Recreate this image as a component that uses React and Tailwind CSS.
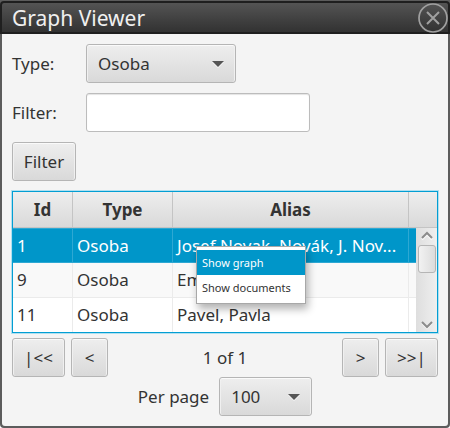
import React from "react";

const button =
  "h-[39px] rounded-[3px] border border-[#b5b5b5] bg-linear-to-b from-[#eeeeee] to-[#d9d9d9] text-center shadow-[inset_0_1px_0_#fafafa,inset_1px_0_0_#f0f0f0,inset_-1px_0_0_#f0f0f0]";

const rows = [
  { id: "1", type: "Osoba", alias: "Josef Novak, Novák, J. Nov...", selected: true },
  { id: "9", type: "Osoba", alias: "Em" },
  { id: "11", type: "Osoba", alias: "Pavel, Pavla" },
];

function Dropdown({ id, className, options }) {
  return (
    <div className={`relative ${className}`}>
      <select id={id} className={`${button} w-full appearance-none pr-8 pl-[11px] text-left outline-none`}>
        {options.map((o) => (
          <option key={o}>{o}</option>
        ))}
      </select>
      <svg className="pointer-events-none absolute top-4 right-3 h-2 w-3" viewBox="0 0 12 8" aria-hidden="true">
        <path d="M0 2H12L6 8Z" fill="#fafafa" />
        <path d="M0 1H12L6 7Z" fill="#555555" />
      </svg>
    </div>
  );
}

function TitleBar() {
  return (
    <header className="flex h-[33px] items-center justify-between rounded-t-[4px] border-2 border-[#1f1f1f] bg-linear-to-b from-[#545454] to-[#323232] pl-2.5">
      <h1 className="text-[21px] leading-7 text-[#f0f0f0]">Graph Viewer</h1>
      <button type="button" aria-label="Close" className="size-[30px] shrink-0">
        <svg viewBox="0 0 30 30" className="size-[30px]" fill="none" stroke="#a0a0a0">
          <circle cx="15" cy="15" r="14" strokeWidth="1.7" />
          <path d="M9 9L21 21M21 9L9 21" strokeWidth="2" />
        </svg>
      </button>
    </header>
  );
}

function ScrollBar() {
  return (
    <div className="absolute top-9 right-0 bottom-0 flex w-[21px] flex-col items-center bg-linear-to-r from-[#dedede] to-[#efefef]">
      <svg className="h-[17px] w-3 shrink-0" viewBox="0 0 12 17" fill="none" aria-hidden="true">
        <path d="M1 11.5L6 6.5L11 11.5" stroke="#fafafa" strokeWidth="2" />
        <path d="M1 10L6 5L11 10" stroke="#8c8c8c" strokeWidth="2" />
      </svg>
      <div className="h-7 w-[18px] shrink-0 rounded-[3px] border border-[#b5b5b5] bg-linear-to-r from-[#f2f2f2] to-[#dcdcdc]" />
      <svg className="mt-auto h-[14px] w-3 shrink-0" viewBox="0 0 12 14" fill="none" aria-hidden="true">
        <path d="M1 5L6 10L11 5" stroke="#fafafa" strokeWidth="2" />
        <path d="M1 4L6 9L11 4" stroke="#8c8c8c" strokeWidth="2" />
      </svg>
    </div>
  );
}

function ContextMenu() {
  return (
    <div
      role="menu"
      className="absolute top-[54px] left-[183px] w-[110px] border border-[#a8a8a8] bg-white py-[3px] text-[11px] leading-[25px] shadow-[2px_5px_8px_rgba(0,0,0,0.3)]"
    >
      <button type="button" role="menuitem" className="block w-full bg-[#0096c9] pl-[5px] text-left text-white">
        Show graph
      </button>
      <button type="button" role="menuitem" className="block w-full pl-[5px] text-left">
        Show documents
      </button>
    </div>
  );
}

function ResultTable() {
  const head =
    "h-9 border-r border-b border-[#c4c4c4] bg-linear-to-b from-[#eeeeee] to-[#d9d9d9] p-0 font-bold";
  return (
    <div className="relative mt-2.5 border border-[#039ed3] bg-white shadow-[0_0_0_1px_#b0e0f0]">
      <table className="w-full table-fixed border-separate border-spacing-0">
        <thead>
          <tr>
            <th className={`${head} w-[60px]`}>Id</th>
            <th className={`${head} w-[100px]`}>Type</th>
            <th className={head}>Alias</th>
            <th className={`${head} w-7 border-r-0`} />
          </tr>
        </thead>
        <tbody>
          {rows.map((r) => {
            const cell = `h-[35px] overflow-hidden border-r py-0 pr-0 pl-1 whitespace-nowrap ${
              r.selected ? "border-t border-b border-[#2ea8d3]" : "border-b border-[#ebebeb]"
            }`;
            return (
              <tr
                key={r.id}
                className={
                  r.selected ? "bg-[#0096c9] text-white" : "odd:bg-white even:bg-[#f9f9f9] last:*:h-[34px] last:*:border-b-0"
                }
              >
                <td className={cell}>{r.id}</td>
                <td className={cell}>{r.type}</td>
                <td className={cell}>{r.alias}</td>
                <td className={`${cell} border-r-0`} />
              </tr>
            );
          })}
        </tbody>
      </table>
      <ScrollBar />
      <ContextMenu />
    </div>
  );
}

export default function App() {
  return (
    <div className="rounded-b-[4px] bg-[#5c5c5c] pt-px font-['Noto_Sans','Open_Sans',sans-serif] text-[17px] leading-6 text-[#333333]">
      <TitleBar />
      <main className="mx-0.5 rounded-b-[3px] bg-[#f4f4f4] px-2.5 pt-2.5 pb-2.5">
        <div className="flex items-center">
          <label htmlFor="type" className="w-[74px]">
            Type:
          </label>
          <Dropdown id="type" className="w-[150px]" options={["Osoba"]} />
        </div>
        <div className="mt-2.5 flex items-center">
          <label htmlFor="filter" className="w-[74px]">
            Filter:
          </label>
          <input
            id="filter"
            type="text"
            className="h-[39px] w-56 rounded-[3px] border border-[#bcbcbc] bg-white px-2 shadow-[inset_0_1px_1px_#e4e4e4] outline-none"
          />
        </div>
        <button type="button" className={`${button} mt-2.5 block w-16`}>
          Filter
        </button>
        <ResultTable />
        <nav aria-label="Pages" className="mt-[5px] flex items-center gap-1.5">
          <button type="button" className={`${button} w-[53px]`}>{"|<<"}</button>
          <button type="button" className={`${button} w-[37px]`}>{"<"}</button>
          <span className="flex-1 text-center">1 of 1</span>
          <button type="button" className={`${button} w-[37px]`}>{">"}</button>
          <button type="button" className={`${button} w-[53px]`}>{">>|"}</button>
        </nav>
        <div className="flex items-center justify-center gap-2.5">
          <label htmlFor="per-page">Per page</label>
          <Dropdown id="per-page" className="w-[93px]" options={["100"]} />
        </div>
      </main>
      <div className="h-0.5" />
    </div>
  );
}
